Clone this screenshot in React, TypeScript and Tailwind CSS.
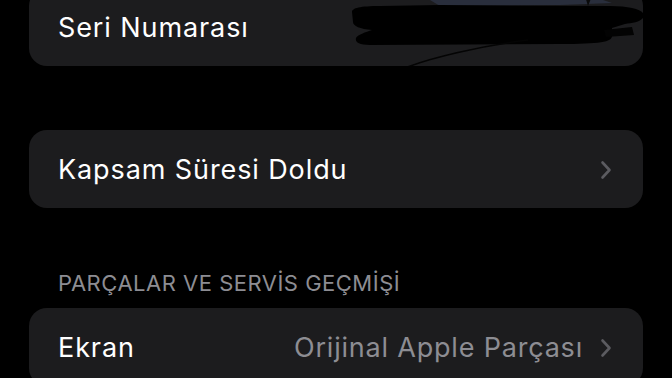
const font = { fontFamily: "Inter, 'Noto Sans', sans-serif" };

function Chevron() {
  return (
    <svg width="12" height="20" viewBox="0 0 12 20" className="shrink-0">
      <path d="M2.5 2.5 L9.5 10 L2.5 17.5" fill="none" stroke="#5b5b60" strokeWidth="2.6" strokeLinecap="round" strokeLinejoin="round" />
    </svg>
  );
}

// scribbled-out serial number (coords are page pixels, shifted into the card)
function Redaction() {
  return (
    <svg className="absolute left-0 top-0" width="643" height="78" viewBox="0 0 643 78">
      <g transform="translate(-29 12)">
        <path d="M430 0 L470 -2 L600 -1 L612 3 L560 5 L440 6 Z" fill="#2b3142" opacity="0.85" />
        <path d="M585 -4 L592 -4 L588 6 Z" fill="#0a0a0a" />
        <path d="M352 12 C352 8 360 6 380 6 L440 5 L610 6 C628 6 640 9 643 13 L643 18 C640 22 632 23 625 24 L612 28 L612 36 C612 42 600 44 560 44 L370 45 C358 45 355 42 356 38 C357 35 366 32 372 30 C360 29 353 26 353 22 Z" fill="#000" />
        <path d="M604 30 L632 27 L634 35 L606 37 Z" fill="#030303" />
        <path d="M405 68 C430 58 480 46 528 40" fill="none" stroke="#040404" strokeWidth="1.6" />
      </g>
    </svg>
  );
}

function Row({ label, value, chevron }: { label: string; value?: string; chevron?: boolean }) {
  return (
    <div className="flex h-[78px] items-center justify-between pl-[29px] pr-[31px] pt-[2px]">
      <span className="text-[27px] tracking-[0.9px] text-white">{label}</span>
      <div className="flex items-center gap-[17px]">
        {value && <span className="text-[27px] tracking-[0.8px] text-[#8d8d93]">{value}</span>}
        {chevron && <Chevron />}
      </div>
    </div>
  );
}

export default function App() {
  return (
    <div className="h-[378px] w-[672px] overflow-hidden bg-black px-[29px]" style={font}>
      <div className="relative -mt-[12px] overflow-hidden rounded-[18px] bg-[#1c1c1e]">
        <Row label="Seri Numarası" />
        <Redaction />
      </div>
      <div className="mt-[64px] overflow-hidden rounded-[18px] bg-[#1c1c1e]">
        <Row label="Kapsam Süresi Doldu" chevron />
      </div>
      <div className="mt-[62px] pl-[29px] text-[22px] leading-[26px] tracking-[0.5px] text-[#8d8d93]">
        PARÇALAR VE SERVİS GEÇMİŞİ
      </div>
      <div className="mt-[12px] overflow-hidden rounded-[18px] bg-[#1c1c1e]">
        <Row label="Ekran" value="Orijinal Apple Parçası" chevron />
      </div>
    </div>
  );
}
